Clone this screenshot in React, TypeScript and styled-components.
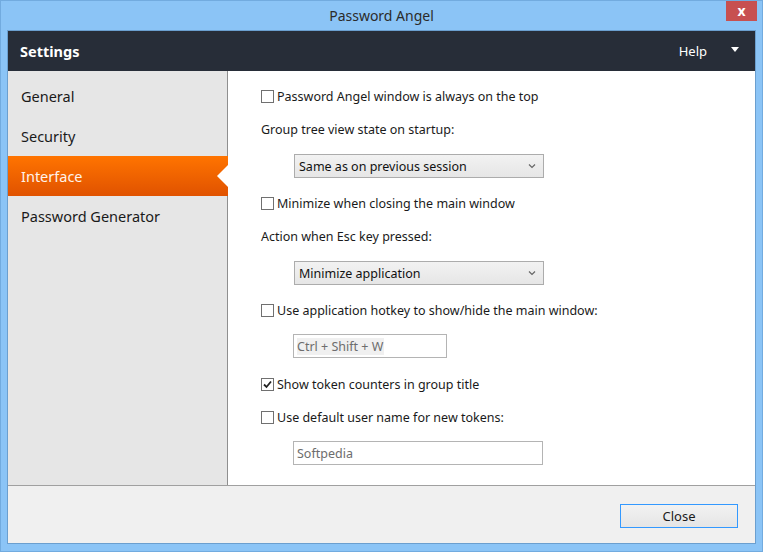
import * as React from 'react'
import styled, { createGlobalStyle } from 'styled-components'

const GlobalStyle = createGlobalStyle`
  html, body {
    margin: 0;
    padding: 0;
    background: #8bc4f6;
  }
  * {
    box-sizing: border-box;
  }
`

const font = `'Noto Sans', 'Open Sans', sans-serif`

const Window = styled.div`
  width: 763px;
  height: 552px;
  background: #8bc4f6;
  border: 1px solid #72abdf;
  display: flex;
  flex-direction: column;
  font-family: ${font};
`

const TitleBar = styled.div`
  height: 29px;
  display: grid;
  grid-template-columns: 1fr auto 1fr;
  align-items: start;
`

const Title = styled.div`
  grid-column: 2;
  font-size: 14px;
  line-height: 29px;
  color: #2b2b2b;
`

const CloseX = styled.button`
  grid-column: 3;
  justify-self: end;
  margin-right: 5px;
  width: 31px;
  height: 20px;
  border: 0;
  padding: 0;
  background: #c75050;
  color: #fff;
  font-family: ${font};
  font-size: 14px;
  font-weight: 700;
  line-height: 18px;
`

const Client = styled.div`
  flex: 1;
  margin: 0 6px 7px 6px;
  border: 1px solid #6b9fcf;
  display: flex;
  flex-direction: column;
  min-height: 0;
`

const Header = styled.div`
  height: 40px;
  background: #272d38;
  display: flex;
  align-items: center;
  padding: 0 16px 0 12px;
  color: #fff;
`

const HeaderTitle = styled.div`
  font-weight: 700;
  font-size: 14.5px;
  flex: 1;
`

const HelpMenu = styled.div`
  display: flex;
  align-items: center;
  gap: 24px;
  font-size: 13px;
`

const Caret = styled.span`
  width: 0;
  height: 0;
  border-left: 4px solid transparent;
  border-right: 4px solid transparent;
  border-top: 5px solid #fff;
  margin-top: -3px;
`

const Body = styled.div`
  flex: 1;
  display: flex;
  min-height: 0;
`

const Sidebar = styled.nav`
  width: 220px;
  background: #e6e6e6;
  border-right: 1px solid #8f8f8f;
  padding-top: 5px;
  display: flex;
  flex-direction: column;
`

const NavItem = styled.div<{ $active?: boolean }>`
  position: relative;
  height: 40px;
  display: flex;
  align-items: center;
  padding: 0 0 1px 13px;
  font-size: 14.5px;
  color: ${p => (p.$active ? '#fff3ea' : '#1a1a1a')};
  background: ${p => (p.$active ? 'linear-gradient(#ff7400, #e05200)' : 'transparent')};
  margin-right: -1px;

  ${p =>
    p.$active &&
    `
    &::after {
      content: '';
      position: absolute;
      right: 0;
      top: 9px;
      border-top: 11px solid transparent;
      border-bottom: 11px solid transparent;
      border-right: 11px solid #fff;
    }
  `}
`

const Content = styled.div`
  flex: 1;
  background: #fff;
  padding: 15px 0 0 33px;
  display: flex;
  flex-direction: column;
  gap: 13px;
  font-size: 12.5px;
  color: #1a1a1a;
`

const Row = styled.label`
  height: 20px;
  display: flex;
  align-items: center;
  gap: 3px;
`

const Box = styled.span`
  width: 13px;
  height: 13px;
  border: 1px solid #707070;
  background: #fff;
  display: inline-flex;
  align-items: center;
  justify-content: center;
`

const Label = styled.div`
  height: 20px;
  display: flex;
  align-items: center;
`

const Field = styled.div<{ $input?: boolean }>`
  padding: ${p => (p.$input ? '1px 0 3px 32px' : '2px 0 2px 33px')};
`

const Select = styled.div`
  width: 250px;
  height: 24px;
  border: 1px solid #acacac;
  background: linear-gradient(#f2f2f2, #e6e6e6);
  display: flex;
  align-items: center;
  justify-content: space-between;
  padding: 0 7px 0 4px;
  color: #111;
`

const Input = styled.div<{ $w: number }>`
  width: ${p => p.$w}px;
  height: 24px;
  border: 1px solid #b4b4b4;
  background: #fff;
  display: flex;
  align-items: center;
  padding-left: 3px;
  color: #6d6d6d;
`

const Dim = styled.span<{ $shade?: boolean }>`
  background: ${p => (p.$shade ? '#f0f0f0' : 'transparent')};
  padding-right: 1px;
`

const Footer = styled.div`
  height: 58px;
  border-top: 1px solid #a0a0a0;
  background: #f0f0f0;
  display: flex;
  align-items: flex-start;
  justify-content: flex-end;
  padding: 18px 17px 0 0;
`

const Button = styled.button`
  width: 118px;
  height: 24px;
  border: 1px solid #3399ff;
  background: linear-gradient(#f2f2f2, #e5e5e5);
  font-family: ${font};
  font-size: 13px;
  color: #1a1a1a;
  padding: 0;
`

const Check = ({ checked }: { checked?: boolean }) => (
  <Box>
    {checked && (
      <svg width="9" height="9" viewBox="0 0 9 9">
        <path d="M1 4.5 L3.5 7 L8 1.5" fill="none" stroke="#222" strokeWidth="1.8" />
      </svg>
    )}
  </Box>
)

const Chevron = () => (
  <svg width="8" height="6" viewBox="0 0 8 6">
    <path d="M1 1.5 L4 4.5 L7 1.5" fill="none" stroke="#666" strokeWidth="1.2" />
  </svg>
)

const App = () => {
  const items = ['General', 'Security', 'Interface', 'Password Generator']
  return (
    <>
      <GlobalStyle />
      <Window>
        <TitleBar>
          <Title>Password Angel</Title>
          <CloseX>x</CloseX>
        </TitleBar>
        <Client>
          <Header>
            <HeaderTitle>Settings</HeaderTitle>
            <HelpMenu>
              Help
              <Caret />
            </HelpMenu>
          </Header>
          <Body>
            <Sidebar>
              {items.map(item => (
                <NavItem key={item} $active={item === 'Interface'}>
                  {item}
                </NavItem>
              ))}
            </Sidebar>
            <Content>
              <Row>
                <Check />
                Password Angel window is always on the top
              </Row>
              <Label>Group tree view state on startup:</Label>
              <Field>
                <Select>
                  Same as on previous session
                  <Chevron />
                </Select>
              </Field>
              <Row>
                <Check />
                Minimize when closing the main window
              </Row>
              <Label>Action when Esc key pressed:</Label>
              <Field>
                <Select>
                  Minimize application
                  <Chevron />
                </Select>
              </Field>
              <Row>
                <Check />
                Use application hotkey to show/hide the main window:
              </Row>
              <Field $input>
                <Input $w={154}>
                  <Dim $shade>Ctrl + Shift + W</Dim>
                </Input>
              </Field>
              <Row>
                <Check checked />
                Show token counters in group title
              </Row>
              <Row>
                <Check />
                Use default user name for new tokens:
              </Row>
              <Field $input>
                <Input $w={250}>
                  <Dim>Softpedia</Dim>
                </Input>
              </Field>
            </Content>
          </Body>
          <Footer>
            <Button>Close</Button>
          </Footer>
        </Client>
      </Window>
    </>
  )
}

export default App
